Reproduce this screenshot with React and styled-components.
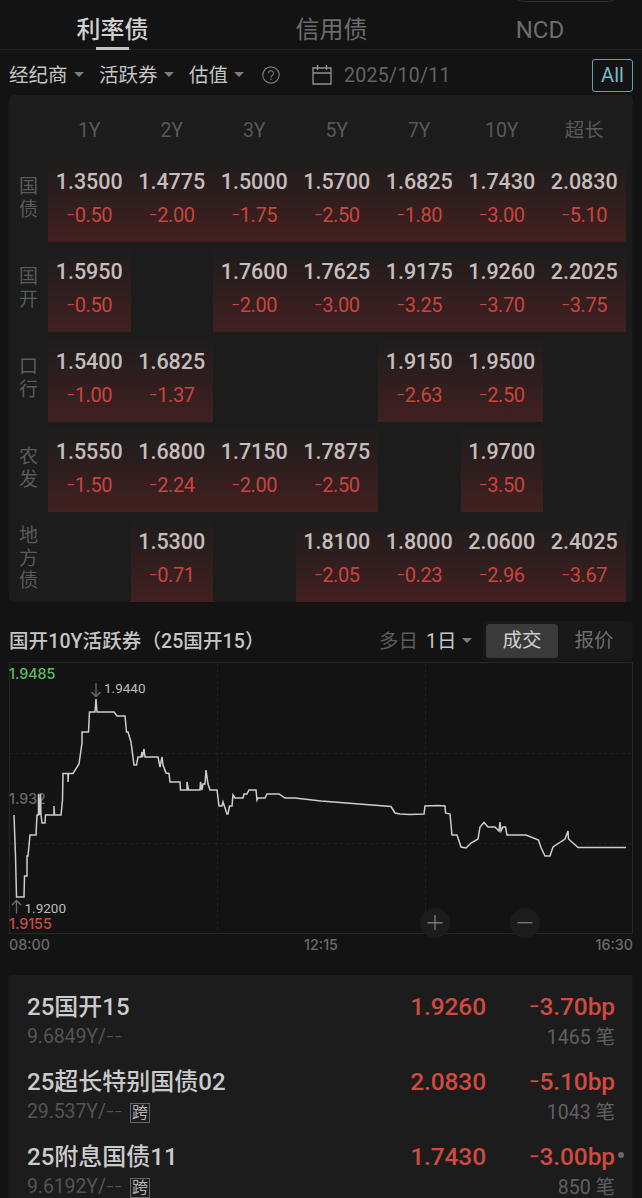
import React from 'react';
import styled, { createGlobalStyle, css } from 'styled-components';

const GlobalStyle = createGlobalStyle`
  * {
    box-sizing: border-box;
  }
  body {
    margin: 0;
    background: #131313;
    color: #c6c6c6;
    font-family: Roboto, "Noto Sans CJK SC", sans-serif;
  }
`;

const Page = styled.div`
  width: 642px;
  height: 1198px;
  overflow: hidden;
  position: relative;
  background: #131313;
`;

const Capsule = styled.div`
  position: absolute;
  top: -30px;
  left: 508px;
  width: 116px;
  height: 32px;
  border: 1px solid #2a2a2a;
  border-radius: 16px;
`;

const Tabs = styled.nav`
  display: grid;
  grid-template-columns: 225px 213px 204px;
  height: 50px;
  border-bottom: 1px solid #212121;
`;

const Tab = styled.div`
  display: flex;
  flex-direction: column;
  align-items: center;
  height: 50px;
  padding-top: 13px;
  font-size: 24px;
  line-height: 34px;
  color: ${(p) => (p.$active ? '#d0d0d0' : '#6d6d6d')};
  font-weight: ${(p) => (p.$active ? 500 : 400)};

  ${(p) => p.$active && css`
    &::after {
      content: '';
      width: 33px;
      height: 3px;
      background: #c4c4c4;
    }
  `}
`;

const FilterBar = styled.div`
  display: flex;
  align-items: center;
  height: 46px;
  padding: 4px 9px 0;
  font-size: 19.5px;
`;

const Filter = styled.div`
  display: flex;
  align-items: center;
  width: ${(p) => p.$width}px;
  padding-bottom: 3px;
  white-space: nowrap;

  &::after {
    content: '';
    margin-left: 6px;
    margin-top: 2px;
    border: 5px solid transparent;
    border-top: 5.5px solid #7d7d7d;
    border-bottom: 0;
  }
`;

const HelpIcon = styled.svg`
  width: 18px;
  height: 18px;
  margin-right: 32px;
`;

const CalendarIcon = styled.svg`
  width: 20px;
  height: 20px;
  margin-right: 12px;
`;

const DateText = styled.span`
  flex: 1;
  color: #636363;
  letter-spacing: 0.3px;
`;

const AllButton = styled.button`
  width: 41px;
  height: 33px;
  padding: 0;
  border: 1.5px solid #56a5b3;
  border-radius: 3px;
  background: transparent;
  color: #72bccb;
  font: inherit;
  font-size: 20px;
`;

const Matrix = styled.section`
  display: grid;
  grid-template-columns: 39px repeat(7, 82.5px);
  grid-template-rows: 57px repeat(5, 90px);
  width: 624px;
  height: 507px;
  margin: -1px 0 0 9px;
  border-radius: 5px;
  background: #1c1c1c;
  overflow: hidden;
`;

const Term = styled.div`
  padding-top: ${(p) => (p.$cjk ? 19 : 24)}px;
  text-align: center;
  font-size: 19.5px;
  color: #585858;
`;

const RowLabel = styled.div`
  align-self: center;
  width: 20px;
  margin: 4px 0 0 10px;
  font-size: 19px;
  line-height: 22.7px;
  color: #5a5a5a;
`;

const Cell = styled.div`
  height: 90px;
  padding-top: 16px;
  text-align: center;
  background: ${(p) => (p.$filled ? 'linear-gradient(to bottom, #1c1c1c 4%, #422020)' : 'none')};
`;

const Yield = styled.div`
  font-size: 21.5px;
  font-weight: 500;
  line-height: 27px;
  color: #c5bdbd;
`;

const Change = styled.div`
  margin-top: 8px;
  font-size: 20px;
  line-height: 24px;
  letter-spacing: -0.4px;
  color: #ca443c;
`;

const Minus = styled.span`
  position: relative;
  top: -0.1em;
  font-size: 0.76em;
  line-height: 1;
`;

const ChartHeader = styled.header`
  display: flex;
  align-items: center;
  height: 60px;
  padding: 18px 9px 0;
  font-size: 19.5px;
`;

const ChartTitle = styled.div`
  width: 370px;
  padding-bottom: 4px;
  font-weight: 500;
  letter-spacing: 0.1px;
  white-space: nowrap;
`;

const Muted = styled.span`
  width: 47px;
  padding-bottom: 4px;
  color: #5d5d5d;
`;

const Switch = styled.div`
  display: flex;
  width: 150px;
  height: 40px;
  padding: 3px;
  border-radius: 5px;
  background: #181818;
`;

const SwitchItem = styled.div`
  width: 72px;
  height: 34px;
  border-radius: 4px;
  line-height: 34px;
  text-align: center;
  color: ${(p) => (p.$active ? '#cfcfcf' : '#707070')};
  background: ${(p) => (p.$active ? '#3a3a3a' : 'transparent')};
`;

const Chart = styled.svg`
  display: block;
  width: 642px;
  height: 298px;
  text {
    font-family: Inter, sans-serif;
    font-size: 14.3px;
    font-weight: 500;
  }
`;

const PeakText = styled.text`
  && {
    font-family: Roboto, sans-serif;
    font-size: 13.5px;
    font-weight: 400;
  }
`;

const BondList = styled.section`
  height: 240px;
  margin: 15px 9px 0;
  padding: 13px 18px 0;
  border-top-left-radius: 2px;
  border-top-right-radius: 2px;
  background: #1c1c1c;
`;

const Bond = styled.article`
  display: grid;
  grid-template-columns: 1fr 120px 129px;
  grid-template-rows: 38px 22px;
  height: 75px;
  white-space: nowrap;
`;

const BondName = styled.div`
  font-size: 24px;
  font-weight: 500;
  line-height: 38px;
  color: #cbcbcb;
`;

const BondFigure = styled.div`
  font-size: 24.5px;
  font-weight: 500;
  line-height: 37px;
  letter-spacing: -0.1px;
  text-align: right;
  color: #d04a40;
`;

const BondMeta = styled.div`
  display: flex;
  align-items: center;
  grid-column: span 2;
  font-size: 19.5px;
  line-height: 24px;
  color: #545454;
`;

const Maturity = styled.span`
  width: 96px;
  letter-spacing: -0.1px;
`;

const TradeCount = styled.div`
  font-size: 19.5px;
  line-height: 23px;
  text-align: right;
  color: #606060;
`;

const CrossTag = styled.span`
  width: 20px;
  height: 20px;
  margin: 1px 0 0 7px;
  border: 1.5px solid #666;
  font-size: 16px;
  line-height: 17px;
  text-align: center;
  color: #b4b4b4;
`;

const Dot = styled.i`
  position: absolute;
  left: 618px;
  top: 1152px;
  width: 6px;
  height: 6px;
  border-radius: 50%;
  background: #6a6a6a;
`;

const TERMS = ['1Y', '2Y', '3Y', '5Y', '7Y', '10Y', '超长'];

const ROWS = [
  {
    label: '国债',
    cells: [['1.3500', '0.50'], ['1.4775', '2.00'], ['1.5000', '1.75'], ['1.5700', '2.50'], ['1.6825', '1.80'], ['1.7430', '3.00'], ['2.0830', '5.10']],
  },
  {
    label: '国开',
    cells: [['1.5950', '0.50'], null, ['1.7600', '2.00'], ['1.7625', '3.00'], ['1.9175', '3.25'], ['1.9260', '3.70'], ['2.2025', '3.75']],
  },
  {
    label: '口行',
    cells: [['1.5400', '1.00'], ['1.6825', '1.37'], null, null, ['1.9150', '2.63'], ['1.9500', '2.50'], null],
  },
  {
    label: '农发',
    cells: [['1.5550', '1.50'], ['1.6800', '2.24'], ['1.7150', '2.00'], ['1.7875', '2.50'], null, ['1.9700', '3.50'], null],
  },
  {
    label: '地方债',
    cells: [null, ['1.5300', '0.71'], null, ['1.8100', '2.05'], ['1.8000', '0.23'], ['2.0600', '2.96'], ['2.4025', '3.67']],
  },
];

const BONDS = [
  { name: '25国开15', term: '9.6849Y/−−', price: '1.9260', change: '−3.70bp', count: '1465 笔' },
  { name: '25超长特别国债02', term: '29.537Y/−−', cross: true, price: '2.0830', change: '−5.10bp', count: '1043 笔' },
  { name: '25附息国债11', term: '9.6192Y/−−', cross: true, price: '1.7430', change: '−3.00bp', count: '850 笔' },
];

const PRICE_LINE = `14,815 15.5,856 16.5,897 24,897 24.5,876 27,876 27,856 28,856 30,835 36,835 37,815
  38.5,815 38.5,794 39.5,815 40.5,794 41,815 42,823 45,823 45.5,815 54,815 54,806 54.5,815 61,815 62.5,800
  63,773.5 68,773.5 68,782 68.5,773.5 73,773.5 79,764 82,743 82,732 88.5,732 89.5,712 95,712 96,699 97,712
  114,712 117,716 125,716 126.5,732 128,732 131,742 134,765 136.5,765 138,757 141,757 142,752 142.5,757
  144,749 145,757 158,757 160,767 162,757 163,765 166,773 169,773.5 170,782 180,782 180.5,790 187,790
  187,782 188.5,790 200,790 200.5,782 202,790 203,784 205,784 206,770 208,784 210,790 217,790 219,806 222,806
  223,802 227,814 228,814 229.5,806 232,806 233,795 235,798 243,798 244,794 247,794 249,790 256,790
  257,800 258,798 265,798 267,794 279,794 285,798 295,798 321,801 391,806.5 395,813 400,814 410,814.5
  424,814 425,806 438,805.5 445,806 445.5,813 450,814 452,835 457,835 461,847 466,848 471,843 478,839
  480,827 484,822.5 488,827 495,827 499,831 500,822 501,831 503,827 505.5,827 507,835 526,835 538.5,840
  541,847.5 545,856 550,856 553,847 565,839 568,831 568.5,839 578,847.5 626,847.5`;

// the font's minus is as wide as a digit, so it is set a size smaller
const Figure = ({ value }) =>
  value.split(/(−)/).map((part, i) => (part === '−' ? <Minus key={i}>−</Minus> : part));

const PriceChart = () => (
  <Chart viewBox="0 662 642 298">
    <g fill="none" stroke="#272727">
      <rect x="9.5" y="662.5" width="623" height="271" />
      <path d="M217.5 663v270M425.5 663v270M10 753.5h622M10 843.5h622" strokeDasharray="3 3" stroke="#202020" />
    </g>
    <text x="9" y="804" fill="#6a6a6a">1.932</text>
    <polyline points={PRICE_LINE} fill="none" stroke="#cdcdcd" strokeWidth="1.5" />
    <g fill="none" stroke="#6c6c6c" strokeWidth="1.3">
      <path d="M96 683v13.5M91.5 692l4.5 4.5 4.5-4.5" />
      <path d="M16.5 913.5v-13M12 905l4.5-4.5 4.5 4.5" />
    </g>
    <text x="9" y="679" fill="#5fbd63">1.9485</text>
    <text x="9" y="929" fill="#cf4a43">1.9155</text>
    <g fill="#bdbdbd">
      <PeakText x="104" y="693">1.9440</PeakText>
      <PeakText x="24.5" y="912.5">1.9200</PeakText>
    </g>
    <g fill="#6a6a6a">
      <text x="9" y="950">08:00</text>
      <text x="321" y="950" textAnchor="middle">12:15</text>
      <text x="633" y="950" textAnchor="end">16:30</text>
    </g>
    <g stroke="#777" strokeWidth="1.4">
      <circle cx="435" cy="923" r="15" fill="#1c1c1c" stroke="none" />
      <path d="M427.5 922.7h15M435 915v15" />
      <circle cx="525" cy="923" r="15" fill="#1c1c1c" stroke="none" />
      <path d="M517.5 922.7h15" />
    </g>
  </Chart>
);

export default function App() {
  return (
    <Page>
      <GlobalStyle />
      <Capsule />
      <Tabs>
        <Tab $active>利率债</Tab>
        <Tab>信用债</Tab>
        <Tab>NCD</Tab>
      </Tabs>
      <FilterBar>
        <Filter $width={90}>经纪商</Filter>
        <Filter $width={90}>活跃券</Filter>
        <Filter $width={73}>估值</Filter>
        <HelpIcon viewBox="0 0 18 18" fill="none" stroke="#777" strokeWidth="1.2">
          <circle cx="9" cy="9" r="8.2" />
          <path d="M6.5 7.2a2.5 2.5 0 1 1 4 2Q9 10 9 11.5M9 12.6v1.5" />
        </HelpIcon>
        <CalendarIcon viewBox="0 0 20 20" fill="none" stroke="#949494" strokeWidth="1.3">
          <path d="M1 3h18v16H1zM1 8h18M5.5 0v5M14.5 0v5" />
        </CalendarIcon>
        <DateText>2025/10/11</DateText>
        <AllButton>All</AllButton>
      </FilterBar>

      <Matrix>
        <span />
        {TERMS.map((term) => <Term key={term} $cjk={term === '超长'}>{term}</Term>)}
        {ROWS.map((row) => (
          <React.Fragment key={row.label}>
            <RowLabel>{row.label}</RowLabel>
            {row.cells.map((cell, i) => (
              <Cell key={TERMS[i]} $filled={!!cell}>
                {cell && (
                  <>
                    <Yield>{cell[0]}</Yield>
                    <Change><Figure value={`−${cell[1]}`} /></Change>
                  </>
                )}
              </Cell>
            ))}
          </React.Fragment>
        ))}
      </Matrix>

      <ChartHeader>
        <ChartTitle>国开10Y活跃券（25国开15）</ChartTitle>
        <Muted>多日</Muted>
        <Filter $width={57}>1日</Filter>
        <Switch>
          <SwitchItem $active>成交</SwitchItem>
          <SwitchItem>报价</SwitchItem>
        </Switch>
      </ChartHeader>
      <PriceChart />

      <BondList>
        {BONDS.map((bond) => (
          <Bond key={bond.name}>
            <BondName>{bond.name}</BondName>
            <BondFigure>{bond.price}</BondFigure>
            <BondFigure><Figure value={bond.change} /></BondFigure>
            <BondMeta>
              <Maturity><Figure value={bond.term} /></Maturity>
              {bond.cross && <CrossTag>跨</CrossTag>}
            </BondMeta>
            <TradeCount>{bond.count}</TradeCount>
          </Bond>
        ))}
      </BondList>
      <Dot />
    </Page>
  );
}
